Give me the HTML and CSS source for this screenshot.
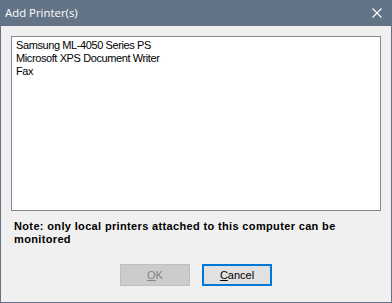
FILE: index.html
```html
<!DOCTYPE html>
<html lang="en">
<head>
    <meta charset="UTF-8">
    <title>Add Printer(s)</title>
    <link rel="stylesheet" href="styles.css">
</head>
<body>
    <div class="window">
        <div class="titlebar">
            <span class="title">Add Printer(s)</span>
            <svg class="close" width="10" height="10" viewBox="0 0 10 10">
                <path d="M0.5 0.5 L9.5 9.5 M9.5 0.5 L0.5 9.5" stroke="#ffffff" stroke-width="1.1" fill="none"/>
            </svg>
        </div>
        <div class="content">
            <div class="list">
                <div class="item">Samsung ML-4050 Series PS</div>
                <div class="item">Microsoft XPS Document Writer</div>
                <div class="item">Fax</div>
            </div>
            <p class="note">Note: only local printers attached to this computer can be monitored</p>
            <div class="buttons">
                <button class="btn" disabled><u>O</u>K</button>
                <button class="btn focused"><u>C</u>ancel</button>
            </div>
        </div>
    </div>
</body>
</html>
```
FILE: styles.css
```css
body {
    margin: 0;
    font-family: "Liberation Sans", Arial, sans-serif;
    font-size: 11px;
}
.window {
    width: 392px;
    height: 303px;
    box-sizing: border-box;
    border: 1px solid #647487;
    border-top: none;
    background: #f0f0f0;
    display: flex;
    flex-direction: column;
}
.titlebar {
    height: 26px;
    background: #647487;
    color: #ffffff;
    display: flex;
    align-items: center;
    justify-content: space-between;
    padding: 0 9px 0 4px;
}
.title {
    font-family: "Open Sans", sans-serif;
    font-size: 11.4px;
    margin-top: -1px;
}
.content {
    padding: 10px 10px 0 10px;
    display: flex;
    flex-direction: column;
}
.list {
    height: 175px;
    box-sizing: border-box;
    border: 1px solid #828790;
    background: #ffffff;
    padding: 2px 4px;
    line-height: 13px;
    letter-spacing: -0.4px;
    color: #000000;
}
.note {
    margin: 9px 0 0 3px;
    font-weight: bold;
    line-height: 13px;
    letter-spacing: 0.35px;
    max-width: 350px;
}
.buttons {
    display: flex;
    justify-content: center;
    gap: 12px;
    margin-top: 18px;
}
.btn {
    width: 70px;
    height: 22px;
    box-sizing: border-box;
    font-family: "Liberation Sans", Arial, sans-serif;
    font-size: 11px;
    padding: 0;
    border: 1px solid #adadad;
    background: #e1e1e1;
    color: #000000;
}
.btn:disabled {
    background: #cccccc;
    border-color: #bfbfbf;
    color: #838383;
}
.btn.focused {
    border: 2px solid #0078d7;
}
```
